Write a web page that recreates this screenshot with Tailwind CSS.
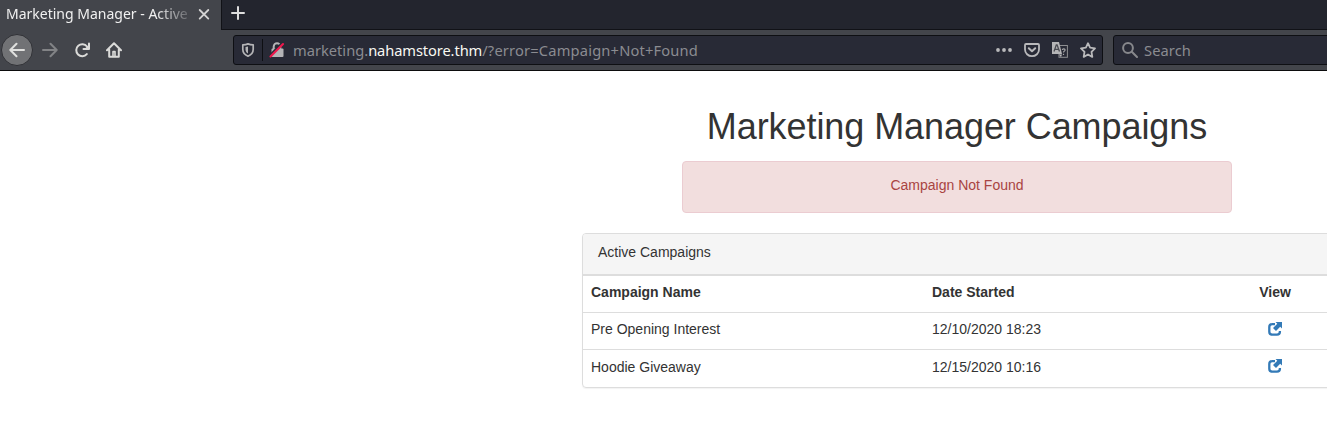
<!DOCTYPE html>
<html lang="en">
<head>
<meta charset="utf-8">
<title>Marketing Manager - Active Campaigns</title>
<script src="https://cdn.jsdelivr.net/npm/@tailwindcss/browser@4"></script>
</head>
<body class="h-[423px] overflow-hidden bg-white">
<header class="w-[1327px] overflow-hidden font-['Noto_Sans',sans-serif] text-[14.67px]">
  <div class="flex h-[30px] bg-[#23252e]">
    <div class="flex h-[30px] w-[221px] shrink-0 items-center bg-[#43454b] pb-[2px] pl-[6px] text-[#f0f0f0]">
      <div class="h-[22px] w-[185px] shrink-0 overflow-hidden text-[14px] leading-[21px] whitespace-nowrap [mask-image:linear-gradient(to_right,black_150px,transparent_190px)]">Marketing Manager - Active</div>
      <svg class="ml-[7px] size-3 shrink-0" viewBox="0 0 12 12" fill="none" stroke="#d4d4d4" stroke-width="1.8" stroke-linecap="round"><path d="M1.700 2l8.600 8.600M10.300 2l-8.600 8.600"/></svg>
    </div>
    <div class="flex h-[30px] grow items-center border-b border-l border-[#111217] pb-[3px] pl-[8px]">
      <svg class="size-4" viewBox="0 0 16 16" fill="none" stroke="#dedede" stroke-width="2" stroke-linecap="round"><path d="M8 2v12M2 8h12"/></svg>
    </div>
  </div>
  <div class="flex h-[41px] items-center border-b border-[#0c0c0d] bg-[#43454b] *:shrink-0">
    <div class="ml-px flex size-8 items-center justify-center rounded-full border border-[#303136] bg-[#717275]">
      <svg class="size-4" viewBox="0 0 16 16" fill="none" stroke="#e0e0de" stroke-width="2" stroke-linecap="round" stroke-linejoin="round"><path d="M15 8H1.500M7.500 1.800L1.300 8l6.200 6.200"/></svg>
    </div>
    <svg class="ml-[9px] size-4" viewBox="0 0 16 16" fill="none" stroke="#828386" stroke-width="2" stroke-linecap="round" stroke-linejoin="round"><path d="M1 8h13.500M8.500 1.800L14.700 8l-6.200 6.200"/></svg>
    <svg class="ml-[16px] size-4" viewBox="0 0 16 16" fill="none" stroke="#dbdbd9" stroke-width="2" stroke-linecap="round"><path d="M12.800 12.100A6 6 0 1 1 13 4.500"/><path d="M15 1.500V7H9.500" stroke-linejoin="round"/><path d="M14.500 3v3.500H11z" fill="#dbdbd9" stroke="none"/></svg>
    <svg class="ml-[16px] size-4" viewBox="0 0 16 16" fill="none" stroke="#dbdbd9" stroke-width="2" stroke-linecap="round" stroke-linejoin="round"><path d="M1 8.200L8 1.200l7 7M3.200 7.500v7.300h9.600V7.500"/><path d="M7 14.500V9.600h2v4.900" stroke-width="1.600"/></svg>
    <div class="ml-[111px] flex h-[30px] w-[870px] items-center rounded-[3px] border border-[#0e0f13] bg-[#282a36] *:shrink-0">
      <svg class="ml-[7px] size-[14px]" viewBox="0 0 14 14" fill="none" stroke="#b4b4b6" stroke-width="1.700" stroke-linejoin="round"><path d="M7 .9c2 .8 3.700.9 5.200.9v4.400c0 3.300-2 5.600-5.200 7-3.200-1.400-5.200-3.700-5.200-7V1.800C3.300 1.800 5 1.700 7 .9z"/><path d="M7 3.600v7C5.200 9.500 4.500 8 4.500 6.200V4z" fill="#b4b4b6" stroke="none"/></svg>
      <div class="ml-[7px] h-[22px] w-px bg-[#0e0f13]"></div>
      <svg class="ml-[6px] size-4" viewBox="0 0 16 16" fill="none"><path d="M4.700 7V4.500a3.300 3.300 0 0 1 6.600 0V7" stroke="#b4b4b6" stroke-width="2"/><rect x="2.500" y="6.500" width="12" height="8.500" rx="1" fill="#b4b4b6"/><path d="M1 13.500L13 1.500" stroke="#282a36" stroke-width="2.500"/><path d="M1.500 14.500L14 2" stroke="#f0174d" stroke-width="2.100" stroke-linecap="round"/></svg>
      <div class="ml-[8px] w-[703px] leading-[28px] whitespace-nowrap text-[#8b8c91]"><span>marketing.</span><span class="tracking-[-0.1px] text-[#f8f8f2]">nahamstore.thm</span><span class="tracking-[0.18px]">/?error=Campaign+Not+Found</span></div>
      <svg class="size-4" viewBox="0 0 16 16" fill="#b9b9bb"><circle cx="2" cy="8" r="1.900"/><circle cx="8" cy="8" r="1.900"/><circle cx="14" cy="8" r="1.900"/></svg>
      <svg class="ml-[12px] size-4" viewBox="0 0 16 16" fill="none" stroke="#b9b9bb" stroke-width="2" stroke-linecap="round" stroke-linejoin="round"><path d="M2 2h12a1 1 0 0 1 1 1v4.500a7 6.700 0 0 1-14 0V3a1 1 0 0 1 1-1z" stroke-width="1.800"/><path d="M4.800 6.300L8 9.300l3.200-3"/></svg>
      <svg class="ml-[12px] size-4" viewBox="0 0 16 16" fill="none"><rect x="7" y="3.500" width="8.400" height="11.800" fill="#282a36" stroke="#8d8e91"/><path d="M0 0h7l3 12H0z" fill="#b4b4b6"/><path d="M2 9.500L4.300 3h.8l2.400 6.500M2.900 7.300h3.700" stroke="#4a4b52" stroke-width="1.300"/><path d="M10.300 8c.2-1.700 3-1.500 2.700.2-.2 1-1.500 1-1.500 2.300M11.500 11.700v1.300" stroke="#a6a6a8" stroke-width="1.200"/><path d="M7 12.500h3l-1 2.800z" fill="#b4b4b6"/></svg>
      <svg class="ml-[12px] size-4" viewBox="0 0 16 16" fill="none" stroke="#b9b9bb" stroke-width="1.800" stroke-linejoin="round"><path d="M8 1.200l2.100 4.500 4.900.7-3.500 3.500.8 5L8 12.500l-4.300 2.400.8-5L1 6.400l4.900-.7z"/></svg>
    </div>
    <div class="ml-[10px] flex h-[30px] w-[240px] items-center rounded-[3px] border border-[#0e0f13] bg-[#282a36]">
      <svg class="ml-[8px] size-4" viewBox="0 0 16 16" fill="none" stroke="#87888c" stroke-width="2" stroke-linecap="round"><circle cx="6" cy="6" r="4.900"/><path d="M9.800 9.800l5.200 5.200"/></svg>
      <div class="ml-[6px] leading-[28px] tracking-[0.1px] text-[#8b8c91]">Search</div>
    </div>
  </div>
</header>
<main class="ml-[582px] w-[750px] font-['Liberation_Sans',Arial,sans-serif] text-[14px] leading-[20px] text-[#333]">
  <h1 class="pt-[36px] text-center text-[36px] leading-[40px] tracking-[-0.07px]">Marketing Manager Campaigns</h1>
  <div class="mx-auto mt-[14px] h-[52px] w-[550px] rounded-[4px] border border-[#ebccd1] bg-[#f2dede] pt-[13px] text-center text-[#a94442]">Campaign Not Found</div>
  <section class="mt-[20px] h-[155px] rounded-[4px] border border-[#ddd] shadow-[0_1px_1px_rgba(0,0,0,0.05)]">
    <div class="h-[41px] rounded-t-[3px] border-b border-[#ddd] bg-[#f5f5f5] px-[15px] pt-[8px]">Active Campaigns</div>
    <div class="grid h-[37px] grid-cols-[341px_299px_104px] border-t border-[#ddd] pt-[6px] font-bold"><div class="pl-2">Campaign Name</div><div class="pl-2">Date Started</div><div class="text-center">View</div></div>
    <div class="grid h-[37px] grid-cols-[341px_299px_104px] border-t border-[#ddd] pt-[6px]"><div class="pl-2">Pre Opening Interest</div><div class="pl-2">12/10/2020 18:23</div>
      <div class="flex justify-center pt-[3px]"><svg class="size-[14px]" viewBox="0 0 14 14" fill="none"><path d="M7 2.200H4.200Q1.300 2.200 1.300 5v4.800Q1.300 12.700 4.200 12.700H9Q11.900 12.700 11.900 9.800V9" stroke="#337ab7" stroke-width="2.300"/><path d="M7.500 0H14v6.500l-1.800-1.800-4.200 4.300-3-3 4.300-4.200z" fill="#337ab7"/></svg></div></div>
    <div class="grid h-[38px] grid-cols-[341px_299px_104px] border-t border-[#ddd] pt-[7px]"><div class="pl-2">Hoodie Giveaway</div><div class="pl-2">12/15/2020 10:16</div>
      <div class="flex justify-center pt-[2px]"><svg class="size-[14px]" viewBox="0 0 14 14" fill="none"><path d="M7 2.200H4.200Q1.300 2.200 1.300 5v4.800Q1.300 12.700 4.200 12.700H9Q11.900 12.700 11.900 9.800V9" stroke="#337ab7" stroke-width="2.300"/><path d="M7.500 0H14v6.500l-1.800-1.800-4.200 4.300-3-3 4.300-4.200z" fill="#337ab7"/></svg></div></div>
  </section>
</main>
</body>
</html>
